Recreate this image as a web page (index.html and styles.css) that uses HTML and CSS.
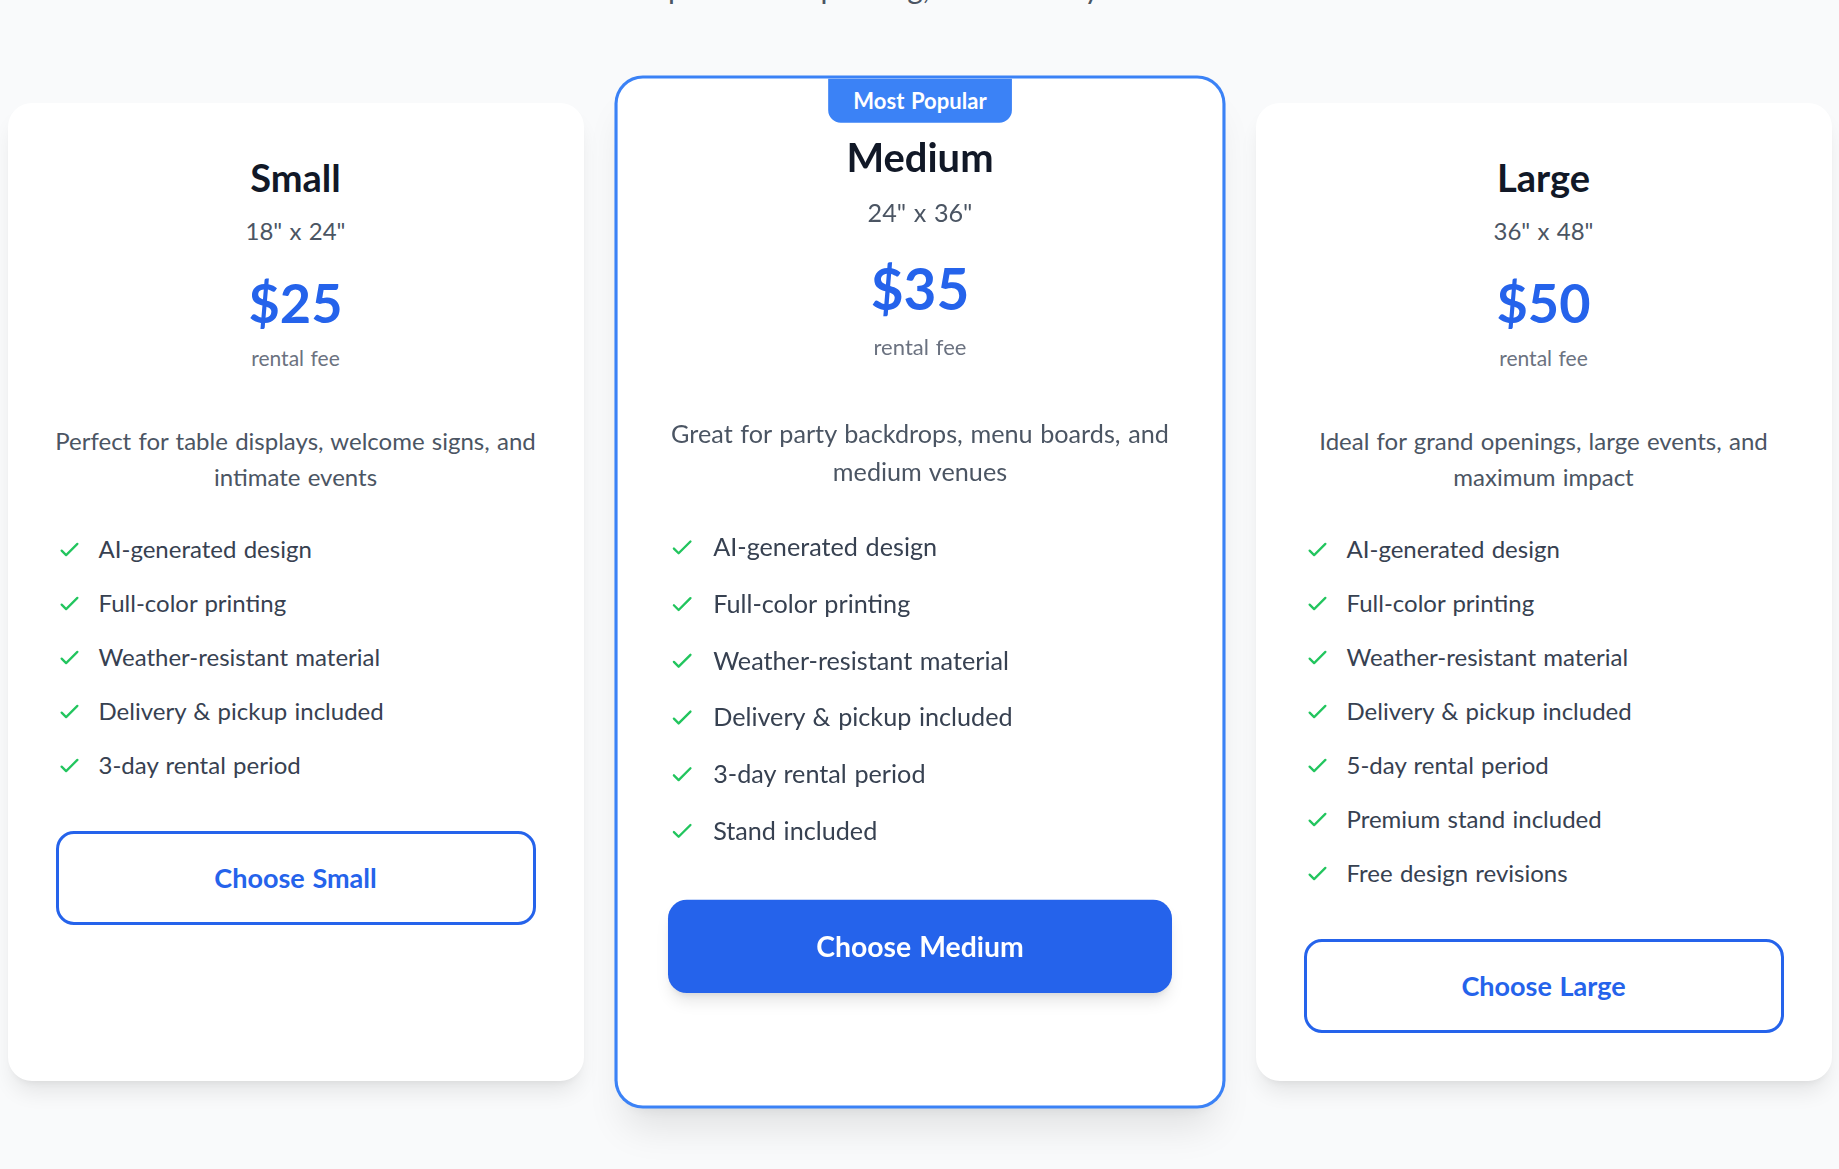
FILE: index.html
```html
<!DOCTYPE html>
<html lang="en">
<head>
<meta charset="utf-8">
<title>Sign Rental Pricing</title>
<link rel="stylesheet" href="styles.css">
</head>
<body>
<main class="pricing">
  <header class="pricing-head">
    <p class="pricing-sub">Every rental comes with a custom AI-generated design plus<br>sharp full-color printing, and delivery included.</p>
  </header>
  <div class="plans">
    <article class="plan">
      <div class="plan-top">
        <h3 class="plan-name">Small</h3>
        <p class="plan-size">18" x 24"</p>
        <p class="plan-price">$25</p>
        <p class="plan-unit">rental fee</p>
      </div>
      <p class="plan-desc">Perfect for table displays, welcome signs, and intimate events</p>
      <ul class="features">
        <li><svg class="check" viewBox="0 0 24 24" fill="none" stroke="currentColor" stroke-width="2" stroke-linecap="round" stroke-linejoin="round"><path d="M5 13l4 4L19 7"/></svg><span>AI-generated design</span></li>
        <li><svg class="check" viewBox="0 0 24 24" fill="none" stroke="currentColor" stroke-width="2" stroke-linecap="round" stroke-linejoin="round"><path d="M5 13l4 4L19 7"/></svg><span>Full-color printing</span></li>
        <li><svg class="check" viewBox="0 0 24 24" fill="none" stroke="currentColor" stroke-width="2" stroke-linecap="round" stroke-linejoin="round"><path d="M5 13l4 4L19 7"/></svg><span>Weather-resistant material</span></li>
        <li><svg class="check" viewBox="0 0 24 24" fill="none" stroke="currentColor" stroke-width="2" stroke-linecap="round" stroke-linejoin="round"><path d="M5 13l4 4L19 7"/></svg><span>Delivery &amp; pickup included</span></li>
        <li><svg class="check" viewBox="0 0 24 24" fill="none" stroke="currentColor" stroke-width="2" stroke-linecap="round" stroke-linejoin="round"><path d="M5 13l4 4L19 7"/></svg><span>3-day rental period</span></li>
      </ul>
      <button class="btn btn-outline" type="button">Choose Small</button>
    </article>

    <article class="plan plan-popular">
      <div class="badge">Most Popular</div>
      <div class="plan-top">
        <h3 class="plan-name">Medium</h3>
        <p class="plan-size">24" x 36"</p>
        <p class="plan-price">$35</p>
        <p class="plan-unit">rental fee</p>
      </div>
      <p class="plan-desc">Great for party backdrops, menu boards, and medium venues</p>
      <ul class="features">
        <li><svg class="check" viewBox="0 0 24 24" fill="none" stroke="currentColor" stroke-width="2" stroke-linecap="round" stroke-linejoin="round"><path d="M5 13l4 4L19 7"/></svg><span>AI-generated design</span></li>
        <li><svg class="check" viewBox="0 0 24 24" fill="none" stroke="currentColor" stroke-width="2" stroke-linecap="round" stroke-linejoin="round"><path d="M5 13l4 4L19 7"/></svg><span>Full-color printing</span></li>
        <li><svg class="check" viewBox="0 0 24 24" fill="none" stroke="currentColor" stroke-width="2" stroke-linecap="round" stroke-linejoin="round"><path d="M5 13l4 4L19 7"/></svg><span>Weather-resistant material</span></li>
        <li><svg class="check" viewBox="0 0 24 24" fill="none" stroke="currentColor" stroke-width="2" stroke-linecap="round" stroke-linejoin="round"><path d="M5 13l4 4L19 7"/></svg><span>Delivery &amp; pickup included</span></li>
        <li><svg class="check" viewBox="0 0 24 24" fill="none" stroke="currentColor" stroke-width="2" stroke-linecap="round" stroke-linejoin="round"><path d="M5 13l4 4L19 7"/></svg><span>3-day rental period</span></li>
        <li><svg class="check" viewBox="0 0 24 24" fill="none" stroke="currentColor" stroke-width="2" stroke-linecap="round" stroke-linejoin="round"><path d="M5 13l4 4L19 7"/></svg><span>Stand included</span></li>
      </ul>
      <button class="btn btn-solid" type="button">Choose Medium</button>
    </article>

    <article class="plan">
      <div class="plan-top">
        <h3 class="plan-name">Large</h3>
        <p class="plan-size">36" x 48"</p>
        <p class="plan-price">$50</p>
        <p class="plan-unit">rental fee</p>
      </div>
      <p class="plan-desc">Ideal for grand openings, large events, and maximum impact</p>
      <ul class="features">
        <li><svg class="check" viewBox="0 0 24 24" fill="none" stroke="currentColor" stroke-width="2" stroke-linecap="round" stroke-linejoin="round"><path d="M5 13l4 4L19 7"/></svg><span>AI-generated design</span></li>
        <li><svg class="check" viewBox="0 0 24 24" fill="none" stroke="currentColor" stroke-width="2" stroke-linecap="round" stroke-linejoin="round"><path d="M5 13l4 4L19 7"/></svg><span>Full-color printing</span></li>
        <li><svg class="check" viewBox="0 0 24 24" fill="none" stroke="currentColor" stroke-width="2" stroke-linecap="round" stroke-linejoin="round"><path d="M5 13l4 4L19 7"/></svg><span>Weather-resistant material</span></li>
        <li><svg class="check" viewBox="0 0 24 24" fill="none" stroke="currentColor" stroke-width="2" stroke-linecap="round" stroke-linejoin="round"><path d="M5 13l4 4L19 7"/></svg><span>Delivery &amp; pickup included</span></li>
        <li><svg class="check" viewBox="0 0 24 24" fill="none" stroke="currentColor" stroke-width="2" stroke-linecap="round" stroke-linejoin="round"><path d="M5 13l4 4L19 7"/></svg><span>5-day rental period</span></li>
        <li><svg class="check" viewBox="0 0 24 24" fill="none" stroke="currentColor" stroke-width="2" stroke-linecap="round" stroke-linejoin="round"><path d="M5 13l4 4L19 7"/></svg><span>Premium stand included</span></li>
        <li><svg class="check" viewBox="0 0 24 24" fill="none" stroke="currentColor" stroke-width="2" stroke-linecap="round" stroke-linejoin="round"><path d="M5 13l4 4L19 7"/></svg><span>Free design revisions</span></li>
      </ul>
      <button class="btn btn-outline" type="button">Choose Large</button>
    </article>
  </div>
</main>
</body>
</html>
```

FILE: styles.css
```css
* { box-sizing: border-box; }

html, body {
  margin: 0;
  padding: 0;
  background: #f9fafb;
}

body {
  font-family: Lato, "Noto Sans", sans-serif;
  color: #374151;
  word-spacing: 0.07em;
}

.pricing {
  display: flex;
  flex-direction: column;
  align-items: center;
  padding-bottom: 140px;
  background: #f9fafb;
}

.pricing-head {
  margin-top: -76px;
  margin-bottom: 95px;
  text-align: center;
}

.pricing-sub {
  margin: 0;
  font-size: 30px;
  line-height: 42px;
  color: #4b5563;
}

.plans {
  display: grid;
  grid-template-columns: repeat(3, 576px);
  gap: 48px;
  align-items: stretch;
}

.plan {
  position: relative;
  background: #ffffff;
  border-radius: 24px;
  padding: 50px 48px 48px;
  box-shadow: 0 15px 22px -5px rgba(0, 0, 0, 0.09), 0 6px 9px -6px rgba(0, 0, 0, 0.08);
}

.plan-popular {
  transform: scale(1.05);
  z-index: 1;
  box-shadow: 0 0 0 3px #3b82f6, 0 28px 36px -8px rgba(0, 0, 0, 0.1), 0 12px 15px -10px rgba(0, 0, 0, 0.08);
}

.badge {
  position: absolute;
  top: 0;
  left: 50%;
  transform: translateX(-50%);
  background: #3b82f6;
  color: #ffffff;
  font-size: 21px;
  font-weight: 700;
  line-height: 30px;
  padding: 6px 24px;
  border-radius: 0 0 12px 12px;
  white-space: nowrap;
}

.plan-top {
  text-align: center;
}

.plan-name {
  margin: 0 0 12px;
  font-size: 38px;
  line-height: 48px;
  font-weight: 700;
  color: #111827;
}

.plan-size {
  margin: 0;
  font-size: 24px;
  line-height: 36px;
  color: #4b5563;
}

.plan-price {
  margin: 24px 0 0;
  font-size: 54px;
  line-height: 60px;
  font-weight: 700;
  color: #2563eb;
}

.plan-unit {
  margin: 10px 0 0;
  font-size: 21px;
  line-height: 30px;
  color: #6b7280;
}

.plan-desc {
  margin: 50px -6px 36px;
  text-align: center;
  font-size: 24px;
  line-height: 36px;
  color: #4b5563;
}

.features {
  list-style: none;
  margin: 0 0 48px;
  padding: 0;
  display: flex;
  flex-direction: column;
  gap: 18px;
}

.features li {
  display: flex;
  align-items: center;
  font-size: 24px;
  line-height: 36px;
  color: #374151;
}

.check {
  flex: none;
  width: 27px;
  height: 27px;
  margin-right: 16px;
  color: #22c55e;
}

.btn {
  display: block;
  width: 100%;
  font-family: inherit;
  font-size: 27px;
  font-weight: 700;
  line-height: 42px;
  padding: 23px 16px;
  border-radius: 18px;
  cursor: pointer;
  word-spacing: inherit;
}

.btn-outline {
  background: #ffffff;
  border: 3px solid #2563eb;
  color: #2563eb;
}

.btn-solid {
  background: #2563eb;
  border: 0;
  padding: 23.5px 16px;
  color: #ffffff;
  box-shadow: 0 10px 15px -3px rgba(0, 0, 0, 0.1), 0 4px 6px -4px rgba(0, 0, 0, 0.1);
}
```
